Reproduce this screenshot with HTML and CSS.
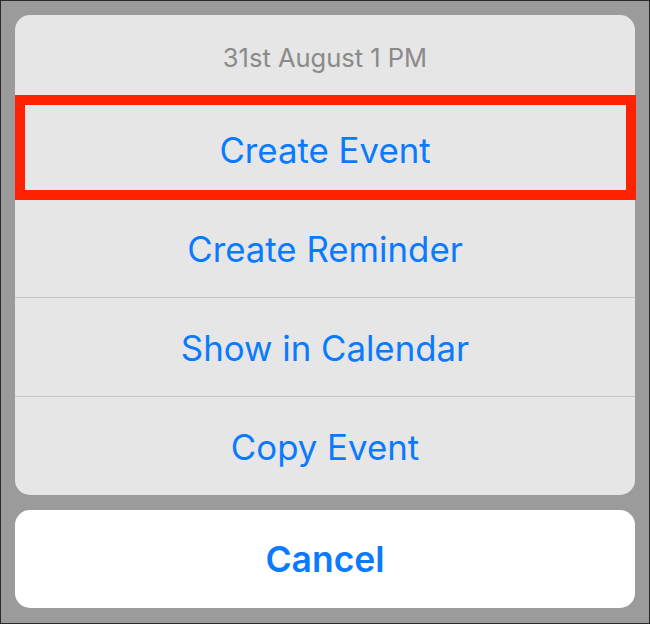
FILE: index.html
```html
<!DOCTYPE html>
<html>
<head>
<meta charset="utf-8">
<link rel="stylesheet" href="styles.css">
</head>
<body>
<div class="screen">
  <div class="sheet">
    <div class="sheet-title">31st August 1 PM</div>
    <div class="action highlighted">Create Event<span class="highlight-box"></span></div>
    <div class="action">Create Reminder</div>
    <div class="action">Show in Calendar</div>
    <div class="action">Copy Event</div>
  </div>
  <div class="cancel">Cancel</div>
</div>
</body>
</html>
```
FILE: styles.css
```css
* { box-sizing: border-box; }
html, body { margin: 0; padding: 0; }
body {
  width: 650px;
  height: 624px;
  font-family: Inter, "Noto Sans", sans-serif;
}
.screen {
  width: 650px;
  height: 624px;
  background: #9b9b9b;
  border: 1px solid #2a2a2a;
  padding: 14px 14px 15px 14px;
  display: flex;
  flex-direction: column;
  gap: 15px;
}
.sheet {
  background: #e6e6e6;
  border-radius: 15px;
  display: flex;
  flex-direction: column;
}
.sheet-title {
  height: 84px;
  display: flex;
  align-items: center;
  justify-content: center;
  color: #8a8a8a;
  font-size: 25.5px;
  letter-spacing: 0;
}
.action {
  position: relative;
  height: 99px;
  padding-top: 2px;
  border-top: 1px solid #c6c6c6;
  display: flex;
  align-items: center;
  justify-content: center;
  color: #0a7aff;
  font-size: 34.8px;
  letter-spacing: 0;
}
.highlight-box {
  position: absolute;
  z-index: 2;
  top: -5px;
  bottom: -2px;
  left: 0;
  right: -1px;
  border: 10px solid #ff2200;
}
.cancel {
  flex: 1;
  background: #ffffff;
  border-radius: 15px;
  display: flex;
  align-items: center;
  justify-content: center;
  color: #0a7aff;
  font-size: 35.5px;
  font-weight: 600;
  letter-spacing: 0;
}
```
